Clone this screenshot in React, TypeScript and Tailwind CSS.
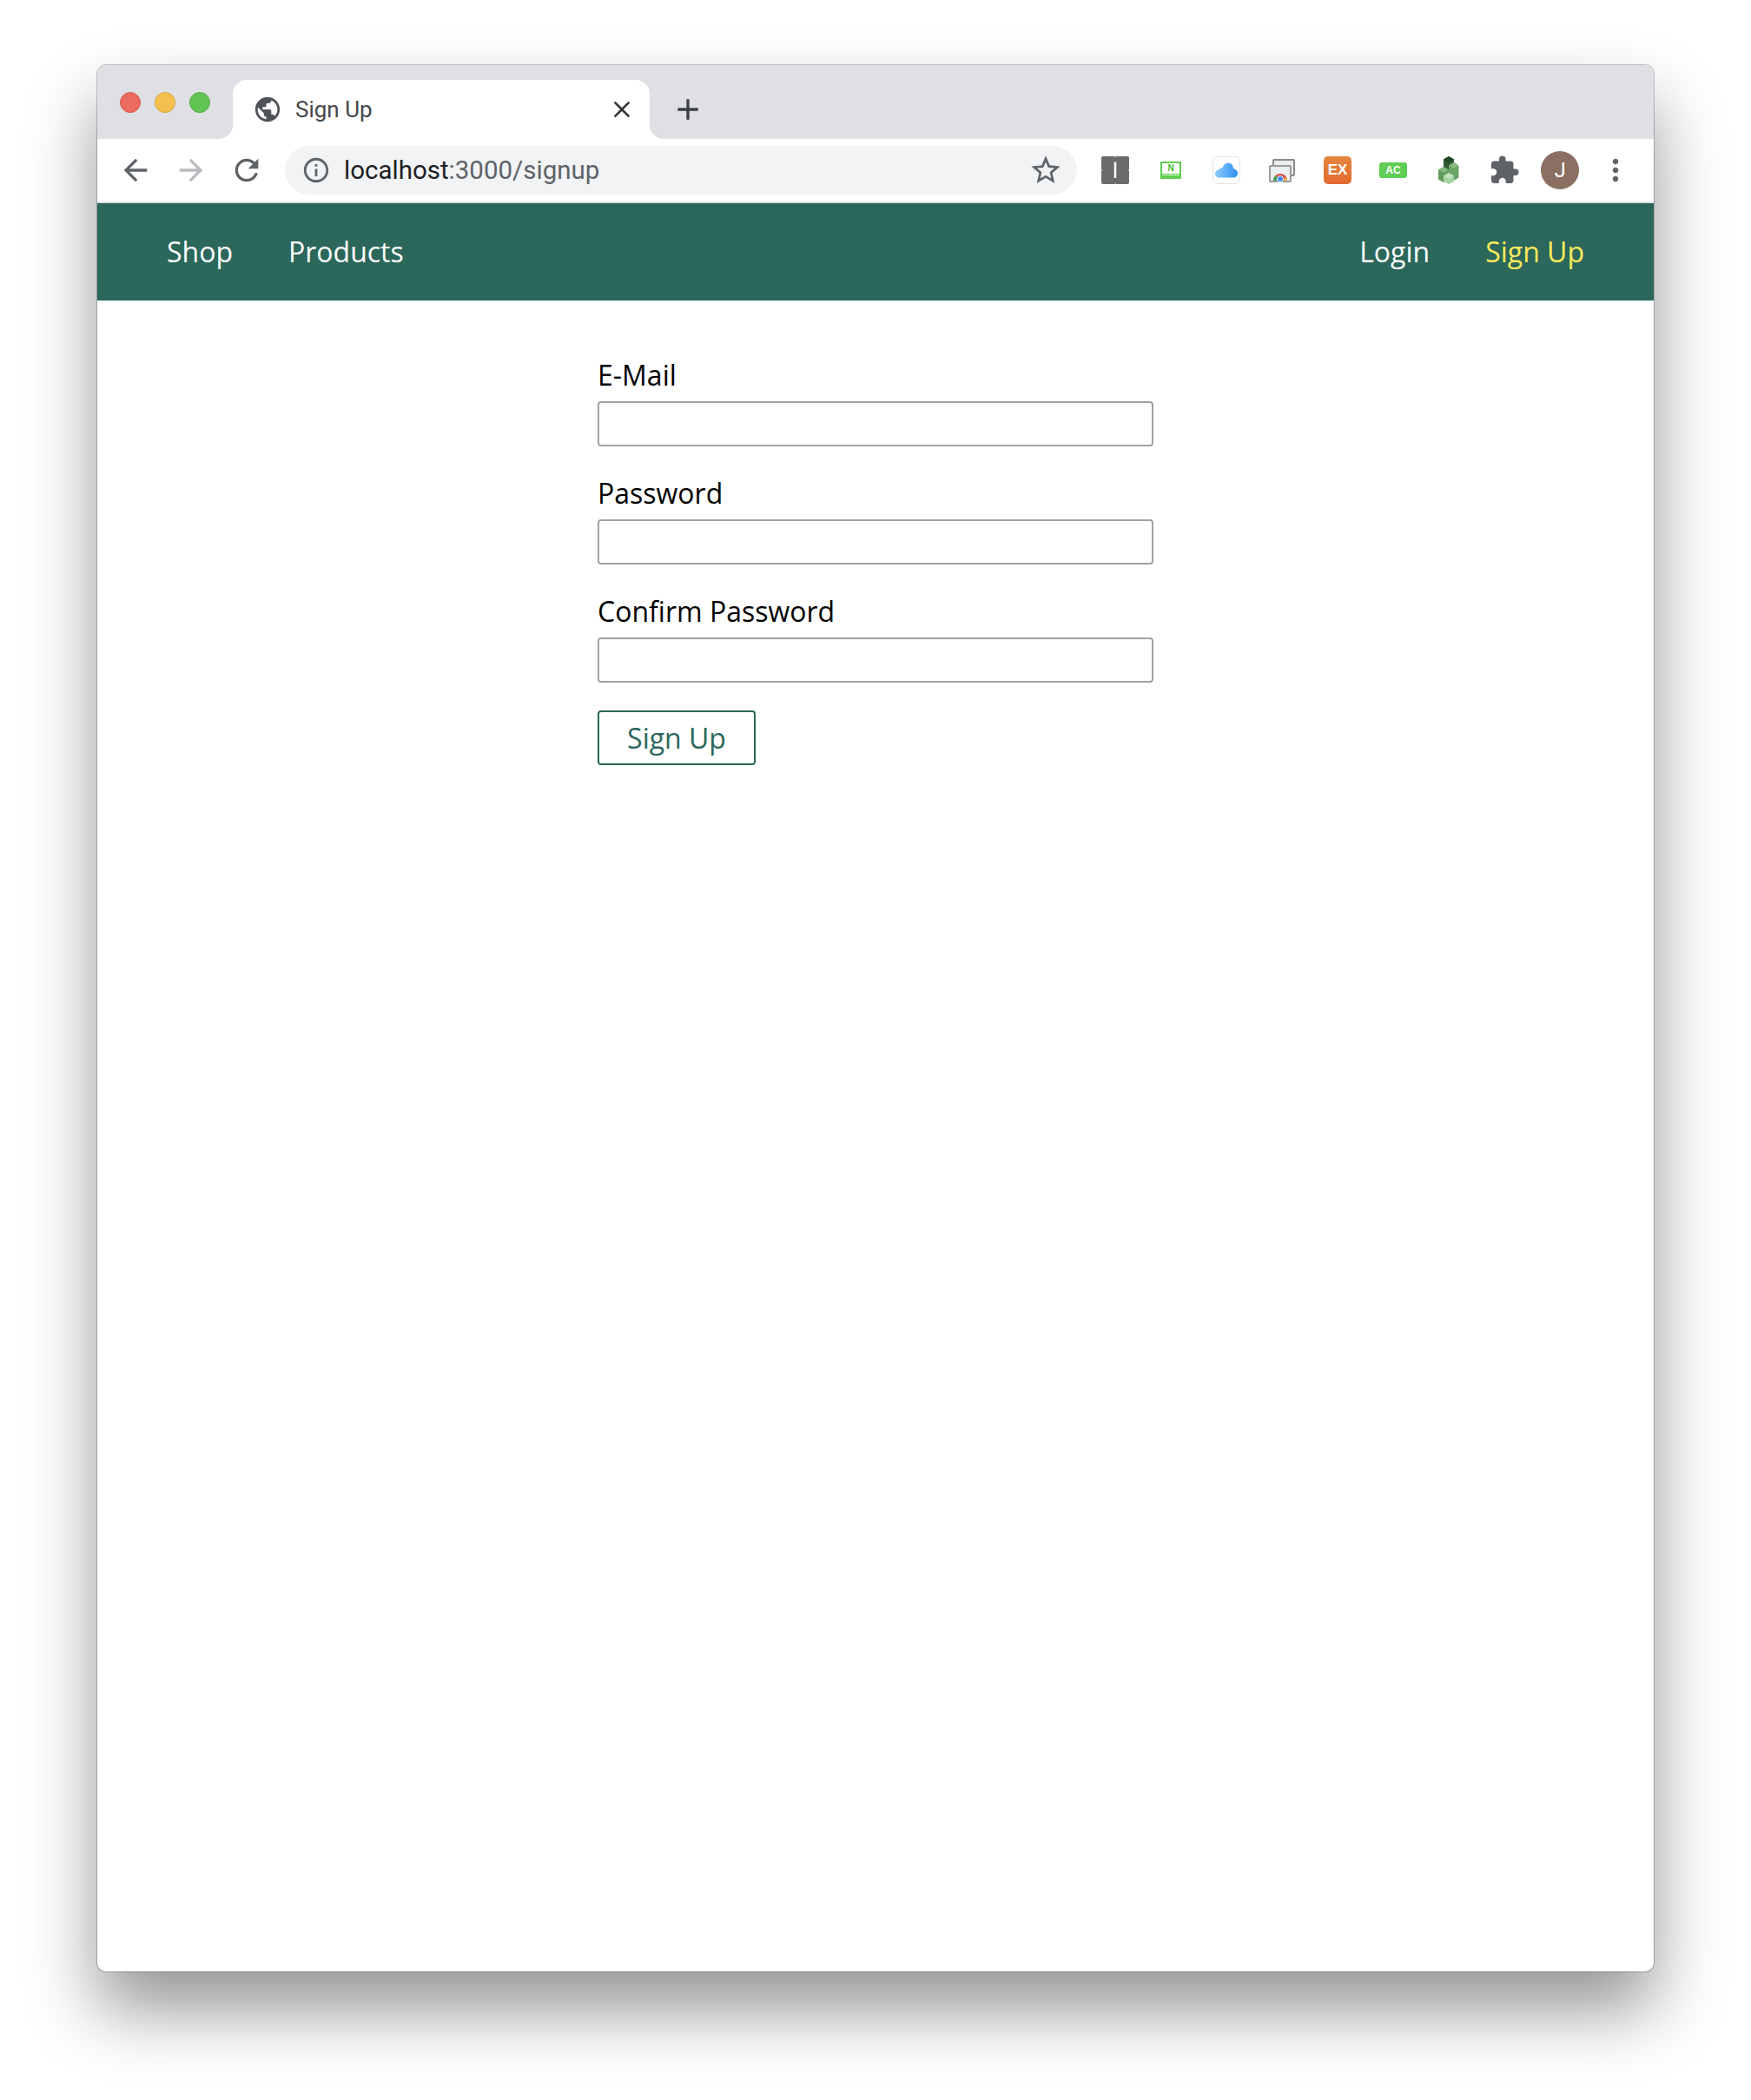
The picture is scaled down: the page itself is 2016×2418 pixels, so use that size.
import {
  MdAdd,
  MdArrowBack,
  MdArrowForward,
  MdClose,
  MdExtension,
  MdInfoOutline,
  MdMoreVert,
  MdPublic,
  MdRefresh,
  MdStarBorder,
} from "react-icons/md";

// ── Extension icons ──────────────────────────────────────────────────────
function PasswordIcon() {
  return (
    <svg width="32" height="32" viewBox="0 0 32 32">
      <rect width="32" height="32" rx="2" fill="#6b6b6b" />
      <rect x="14.750" y="6.500" width="2.500" height="18.500" fill="#fff" />
      <rect x="15.500" y="0" width="1" height="1.500" fill="#ccc" />
      <rect x="15.500" y="30.500" width="1" height="1.500" fill="#ccc" />
      <rect x="0" y="15.500" width="1.500" height="1" fill="#ccc" />
      <rect x="30.500" y="15.500" width="1.500" height="1" fill="#ccc" />
    </svg>
  );
}

function NodeIcon() {
  return (
    <div className="w-[24px] h-[20px] bg-[#5fce4e] px-[2px] pt-[2px] flex flex-col">
      <div className="h-[12px] bg-white flex items-center justify-center text-[10px] leading-none font-bold text-[#3fb52e] font-['Liberation_Sans',sans-serif]">
        N
      </div>
      <div className="h-[1px] mt-[1px] bg-[#d5f5cf]" />
    </div>
  );
}

function CloudIcon() {
  return (
    <div className="size-[32px] rounded-[6px] border border-[#e3e3e3] bg-white flex items-center justify-center">
      <svg width="26" height="18" viewBox="0 0 26 18">
        <defs>
          <linearGradient id="cloud" x1="0" y1="0" x2="1" y2="0">
            <stop offset="0" stopColor="#8ccbf9" />
            <stop offset="1" stopColor="#2f8ff0" />
          </linearGradient>
        </defs>
        <path
          d="M5 17.500C2 17.500 0 15.400 0 13c0-2.500 1.900-4.300 4.400-4.400C5.400 6.700 7 6 8.500 6.300 9.800 2.600 12.300 0.500 15 0.500c3.400 0 5.900 2.900 6 6.400 2.800 0.500 5 2.800 5 5.500 0 2.900-2.100 5.100-5 5.100z"
          fill="url(#cloud)"
        />
      </svg>
    </div>
  );
}

function RemoteIcon() {
  return (
    <svg width="30" height="27" viewBox="0 0 30 27">
      <rect x="5" y="1" width="24" height="18" rx="1" fill="#eceff1" stroke="#8a8a8a" strokeWidth="2" />
      <rect x="1" y="8" width="24" height="18" rx="1" fill="#eceff1" stroke="#9a9a9a" strokeWidth="2" />
      <path d="M5 25a8 8 0 0 1 16 0z" fill="#d9493a" />
      <path d="M5 25a8 8 0 0 1 3-6l4 6z" fill="#3aa757" />
      <path d="M17 25l2-4a8 8 0 0 1 2 4z" fill="#f6c544" />
      <circle cx="13" cy="23" r="3.500" fill="#4285f4" stroke="#fff" strokeWidth="1" />
    </svg>
  );
}

function TextBadge({ label, className }: { label: string; className: string }) {
  return (
    <div
      className={`w-[32px] flex items-center justify-center text-white font-bold font-['Liberation_Sans',sans-serif] ${className}`}
    >
      {label}
    </div>
  );
}

function CubesIcon() {
  return (
    <svg width="24" height="32" viewBox="0 0 24 32">
      <path d="M12 0l6 3.500v9l-6 3.500-6-3.500v-9z" fill="#2f5a34" />
      <path d="M12 0l6 3.500-6 3.500-6-3.500z" fill="#1f4526" />
      <path d="M18 7l5.500 3.500v14L18 28l-6-3.500V10.500z" fill="#6aa565" />
      <path d="M18 7l5.500 3.500L18 14l-6-3.500z" fill="#85bb7d" />
      <path d="M6 12l6 3.500v11L6 30l-6-3.500v-11z" fill="#5f9c5c" />
      <path d="M6 12l6 3.500L6 19l-6-3.500z" fill="#82b87b" />
      <path d="M12 19l6 3.500V29l-6 3-6-3v-6.500z" fill="#a6d3a2" />
      <path d="M12 19l6 3.500-6 3.500-6-3.500z" fill="#c2e3bd" />
    </svg>
  );
}

const extensions = [
  <PasswordIcon key="password" />,
  <NodeIcon key="node" />,
  <CloudIcon key="cloud" />,
  <RemoteIcon key="remote" />,
  <TextBadge
    key="ex"
    label="EX"
    className="h-[32px] rounded-[5px] text-[17px] bg-gradient-to-b from-[#e6843c] to-[#e26a2f]"
  />,
  <TextBadge key="ac" label="AC" className="h-[18px] rounded-[3px] text-[12px] bg-[#5fce55]" />,
  <CubesIcon key="cubes" />,
  <MdExtension key="puzzle" className="size-[36px] text-[#5f6368]" />,
];

// ── Browser chrome ───────────────────────────────────────────────────────
function TabStrip() {
  return (
    <div className="flex h-[85px] bg-white">
      <div className="w-[156px] bg-[#dfe0e4] rounded-br-[16px] pl-[26px] pt-[31px] flex gap-[16px]">
        <span className="size-[24px] rounded-full bg-[#ed6a5e] border border-[#d5564c]" />
        <span className="size-[24px] rounded-full bg-[#f5bf4f] border border-[#d9a33c]" />
        <span className="size-[24px] rounded-full bg-[#61c554] border border-[#52a944]" />
      </div>
      <div className="bg-[#dfe0e4] pt-[17px]">
        <div className="w-[480px] h-[68px] bg-white rounded-t-[16px] flex items-center pl-[23px] pr-[16px]">
          <MdPublic className="size-[34px] text-[#4f5257]" />
          <span className="ml-[15px] flex-1 text-[26px] text-[#45474b] font-['Roboto',sans-serif]">
            Sign Up
          </span>
          <MdClose className="size-[32px] text-[#35373b]" />
        </div>
      </div>
      <div className="flex-1 bg-[#dfe0e4] rounded-bl-[16px] pl-[24px] pt-[31px]">
        <MdAdd className="size-[40px] text-[#3c4043]" />
      </div>
    </div>
  );
}

function Toolbar() {
  return (
    <div className="h-[74px] bg-white border-b-2 border-[#dfe0e4] flex items-center pl-[24px]">
      <div className="flex gap-[24px]">
        <MdArrowBack className="size-[40px] text-[#5f6368]" />
        <MdArrowForward className="size-[40px] text-[#b9bbbe]" />
        <MdRefresh className="size-[40px] text-[#5f6368]" />
      </div>
      <div className="ml-[24px] w-[912px] h-[56px] rounded-full bg-[#f1f3f4] flex items-center pl-[19px] pr-[16px]">
        <MdInfoOutline className="size-[34px] text-[#5f6368]" />
        <span className="ml-[15px] flex-1 text-[29.500px] text-[#5f6368] font-['Roboto',sans-serif]">
          <span className="text-[#202124]">localhost</span>:3000/signup
        </span>
        <MdStarBorder className="size-[40px] text-[#5f6368]" />
      </div>
      <div className="ml-[12px] flex">
        {extensions.map((icon, i) => (
          <div key={i} className="w-[64px] flex items-center justify-center">
            {icon}
          </div>
        ))}
        <div className="w-[64px] flex items-center justify-center">
          <div className="size-[44px] rounded-full bg-[#8a6f62] flex items-center justify-center text-[24px] text-white font-['Roboto',sans-serif]">
            J
          </div>
        </div>
        <div className="w-[64px] flex items-center justify-center">
          <MdMoreVert className="size-[40px] text-[#5f6368]" />
        </div>
      </div>
    </div>
  );
}

// ── Page content ─────────────────────────────────────────────────────────
function Header() {
  return (
    <header className="h-[112px] bg-[#2b675b] px-[80px] flex items-center justify-between text-[32px] text-white">
      <nav className="flex gap-[64px]">
        <a>Shop</a>
        <a>Products</a>
      </nav>
      <nav className="flex gap-[64px]">
        <a>Login</a>
        <a className="text-[#fdeb5a]">Sign Up</a>
      </nav>
    </header>
  );
}

function Field({ label, type }: { label: string; type: string }) {
  return (
    <div className="mb-[32px]">
      <label className="block mb-[8px] leading-[44px] text-black">{label}</label>
      <input
        type={type}
        className="block w-full h-[52px] border-2 border-[#a1a1a1] rounded-[4px] bg-white"
      />
    </div>
  );
}

export default function App() {
  return (
    <div className="min-h-[2418px] bg-white pt-[75px] pl-[112px] font-['Open_Sans',sans-serif]">
      <div className="w-[1792px] h-[2195px] bg-white rounded-[10px] overflow-hidden shadow-[0_0_0_1px_rgba(0,0,0,0.22),0_44px_80px_rgba(0,0,0,0.42)]">
        <TabStrip />
        <Toolbar />
        <Header />
        <form className="w-[640px] mx-auto mt-[64px] text-[32px]">
          <Field label="E-Mail" type="email" />
          <Field label="Password" type="password" />
          <Field label="Confirm Password" type="password" />
          <button
            type="button"
            className="h-[63px] w-[182px] border-2 border-[#2b675b] rounded-[4px] text-[#2b675b] bg-white"
          >
            Sign Up
          </button>
        </form>
      </div>
    </div>
  );
}
